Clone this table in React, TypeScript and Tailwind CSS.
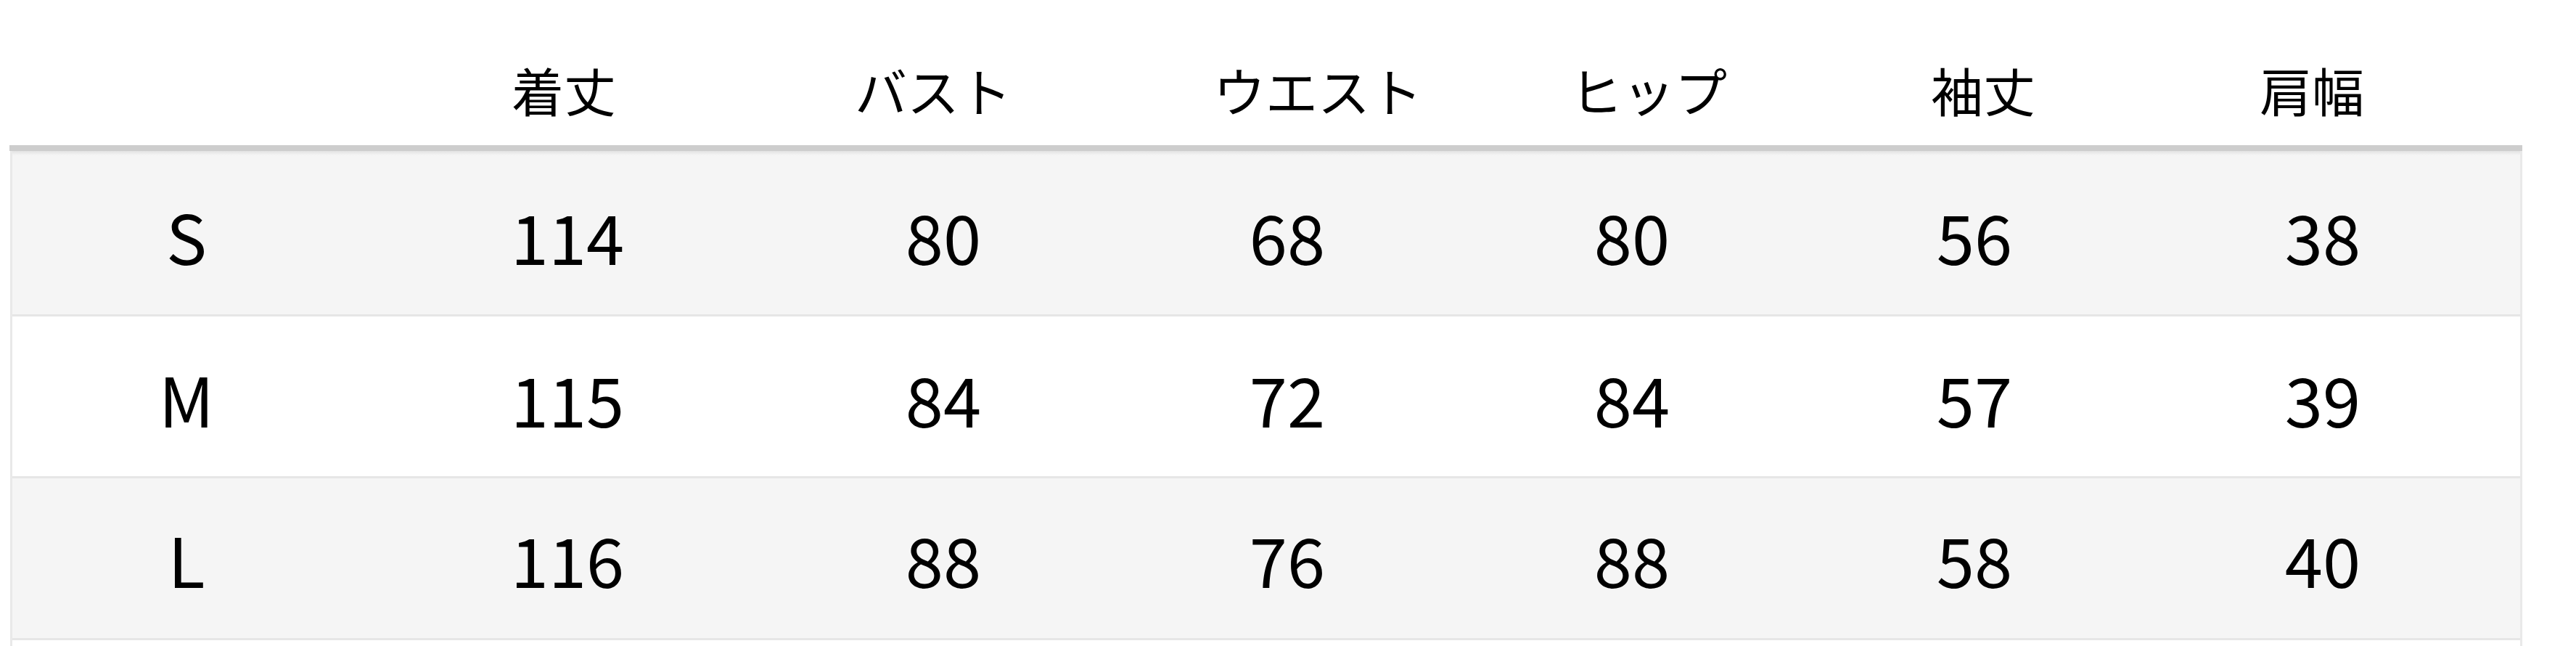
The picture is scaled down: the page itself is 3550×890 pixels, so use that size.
import React from "react";

const headers = ["", "着丈", "バスト", "ウエスト", "ヒップ", "袖丈", "肩幅"];
const rows: { cells: string[]; bg: string; h: string }[] = [
  { cells: ["S", "114", "80", "68", "80", "56", "38"], bg: "bg-[linear-gradient(to_bottom,#e2e2e2_0px,#f5f5f5_6px)]", h: "h-[228px] pt-[6px]" },
  { cells: ["M", "115", "84", "72", "84", "57", "39"], bg: "bg-white", h: "h-[223px] pt-[4px]" },
  { cells: ["L", "116", "88", "76", "88", "58", "40"], bg: "bg-[#f5f5f5]", h: "h-[223px] pt-[0px]" },
];

export default function App() {
  return (
    <div className="w-[3550px] h-[890px] overflow-hidden bg-white text-black font-['Noto_Sans_CJK_JP','Noto_Sans',sans-serif]">
      <div className="h-[200px] pl-[17px] pt-[45px] grid grid-cols-[480px_560px_458px_602px_310px_612px_294px] items-center text-[72px] leading-none">
        {headers.map((h, i) => (
          <div key={i} className="text-center">
            {h}
          </div>
        ))}
      </div>
      <div className="ml-[13px] w-[3463px] h-[8px] bg-[#cdcdcd]" />
      <div className="ml-[14px] w-[3462px] border-x-[3px] border-[#e9e9e9] h-[690px]">
        {rows.map((r, ri) => (
          <div
            key={ri}
            className={`${r.bg} ${r.h} border-b-[3px] border-[#e6e6e6] grid grid-cols-[480px_570px_466px_482px_468px_476px_484px] items-center text-[94px] leading-none`}
          >
            {r.cells.map((c, ci) => (
              <div key={ci} className="text-center">
                {c}
              </div>
            ))}
          </div>
        ))}
      </div>
    </div>
  );
}
